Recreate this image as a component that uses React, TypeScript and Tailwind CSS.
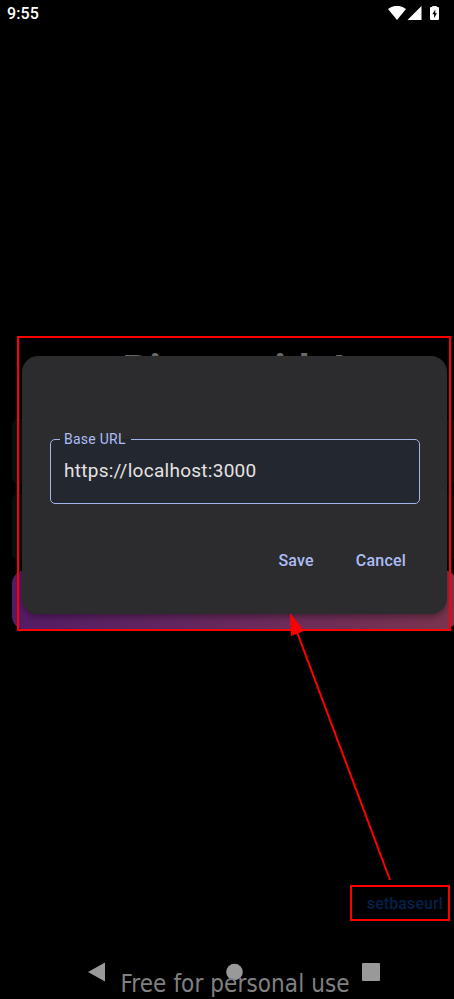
function StatusBar() {
  return (
    <header className="flex h-[26px] shrink-0 items-center justify-between pl-[7px] pr-[14px] text-white">
      <span className="pt-px text-[16px] leading-[27px] font-medium tracking-[0.1px]">9:55</span>
      <svg width="52" height="16" viewBox="0 0 52 16" fill="#fff" className="mt-px">
        <path d="M0 3 Q9-3.4 18 3 L9 14Z" />
        <path d="M33.5 0V14H19.5Z" />
        <path
          fillRule="evenodd"
          d="M44.3-.5h4.4v1.5h1.3q1 0 1 1v11q0 1-1 1h-7q-1 0-1-1v-11q0-1 1-1h1.3ZM47.3 3.5L44.4 8.3h1.7V12L49 7.2h-1.7Z"
        />
      </svg>
    </header>
  );
}

function WelcomeScreen() {
  return (
    <main className="flex grow flex-col overflow-hidden">
      <h1 className="mt-[320px] pl-[122.5px] text-[42px] leading-[50px] font-bold tracking-[0.1px] text-[#6c6c6c]">
        Bienvenido!
      </h1>
      <div className="mt-[23px] ml-[12px] flex w-[445px] shrink-0 flex-col">
        <div className="h-[65px] rounded-[6px] border border-[#070e0f] bg-[#080d0e]" />
        <div className="mt-[10px] h-[66px] rounded-[6px] border border-[#070e0f] bg-[#080d0e]" />
        <div className="mt-[10px] h-[60px] rounded-[14px] bg-linear-to-r from-[#541b66] via-[#69295d] to-[#7a344e]" />
      </div>
      <div className="mt-[260px] flex justify-end pr-[11px]">
        <span className="text-[16px] leading-[27px] font-medium tracking-[0.1px] text-[#02204a]">setbaseurl</span>
      </div>
    </main>
  );
}

function NavBar() {
  return (
    <nav className="flex h-[54px] shrink-0 items-center pl-[88px]">
      <svg width="292" height="20" viewBox="0 0 292 20" fill="#999">
        <path d="M17 .5V19.5L0 10Z" />
        <circle cx="146.5" cy="10" r="8.3" />
        <rect x="274" y="1" width="18" height="18" rx="1" />
      </svg>
    </nav>
  );
}

function BaseUrlDialog() {
  return (
    <section className="absolute top-[356px] left-[22px] flex h-[258px] w-[425px] flex-col rounded-[16px] bg-[#2c2c2e] px-[28px] pt-[83px] shadow-[0_3px_6px_rgba(0,0,0,0.35)]">
      <div className="relative flex h-[65px] w-[369.5px] items-center rounded-[5px] border border-[#a2b3ea] bg-[#23272f] pl-[13px]">
        <span className="absolute -top-[9px] left-[9px] bg-linear-to-b from-[#2c2c2e] from-50% to-[#23272f] to-50% pr-[5px] pl-[4px] text-[14px] leading-[16px] tracking-[0.25px] text-[#adbdf5]">
          Base URL
        </span>
        <span className="text-[19px] tracking-[0.27px] text-[#e6e2e3]">https://localhost:3000</span>
      </div>
      <div className="mt-[44.5px] flex justify-end gap-[42px] pr-[13px] text-[16px] leading-[24px] font-medium tracking-[0.2px] text-[#adbdf5]">
        <span>Save</span>
        <span>Cancel</span>
      </div>
    </section>
  );
}

export default function App() {
  return (
    <div className="relative flex h-[999px] w-[454px] flex-col overflow-hidden bg-black font-[Roboto,sans-serif]">
      <StatusBar />
      <WelcomeScreen />
      <NavBar />
      <BaseUrlDialog />
      <div className="absolute top-[336px] left-[17px] h-[295px] w-[434px] border-2 border-[#f00]" />
      <div className="absolute top-[885px] left-[350px] h-[36px] w-[100px] border-2 border-[#f00]" />
      <svg className="absolute top-[613px] left-[285px]" width="110" height="270" viewBox="285 613 110 270">
        <path d="M297 632L390 880" stroke="#f00" strokeWidth="2" />
        <path d="M290 613L304 631L291 636Z" fill="#f00" />
      </svg>
      <div className="absolute top-[969px] left-[120.5px] font-['DejaVu_Sans_Condensed','DejaVu_Sans',sans-serif] text-[24px] leading-[30px] tracking-[0.09px] whitespace-nowrap text-[#808080]">
        Free for personal use
      </div>
    </div>
  );
}
